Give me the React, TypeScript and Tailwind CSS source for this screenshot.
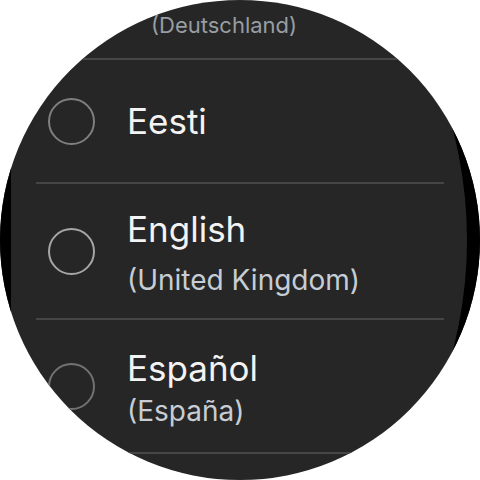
import React from "react";

type Lang = { title: string; sub?: string; ring: string; subGap: string; shift: string; h: string };

const langs: Lang[] = [
  { title: "Eesti", ring: "border-[#7f7f7f]", subGap: "", shift: "", h: "h-[122px]" },
  { title: "English", sub: "(United Kingdom)", ring: "border-[#a6a6a6]", subGap: "mt-[10px]", shift: "mt-[4px]", h: "h-[134px]" },
  { title: "Español", sub: "(España)", ring: "border-[#727272]", subGap: "mt-[2px]", shift: "mt-[3px]", h: "h-[132px]" },
];

function Divider() {
  return <div className="mx-[36px] h-[2px] shrink-0 bg-[#484645]" />;
}

export default function App() {
  return (
    <div className="w-[480px] h-[480px] bg-white" style={{ fontFamily: 'Inter, "Open Sans", sans-serif' }}>
      <div className="w-[480px] h-[480px] rounded-[240px] overflow-hidden bg-[#262626] shadow-[inset_-212px_0_0_-199px_#000,inset_571px_0_0_-560px_#000] flex flex-col">
        {/* tail of the previous item, scaled down near the edge */}
        <div className="h-[58px] shrink-0 flex items-end pb-[19px] pl-[151px]">
          <span className="text-[22px] leading-[28px] text-[#979da3]">(Deutschland)</span>
        </div>
        <Divider />
        {langs.map((l) => (
          <React.Fragment key={l.title}>
            <div className={`${l.h} shrink-0 flex items-center pl-[48px]`}>
              <div className={`w-[47px] h-[47px] rounded-full border-2 ${l.ring} shrink-0`} />
              <div className={`ml-[32px] flex flex-col ${l.shift}`}>
                <span className="text-[35px] leading-[44px] text-[#f3f3f3]">{l.title}</span>
                {l.sub && (
                  <span className={`text-[28px] leading-[38px] text-[#c6cdd5] ${l.subGap}`}>{l.sub}</span>
                )}
              </div>
            </div>
            <Divider />
          </React.Fragment>
        ))}
      </div>
    </div>
  );
}
